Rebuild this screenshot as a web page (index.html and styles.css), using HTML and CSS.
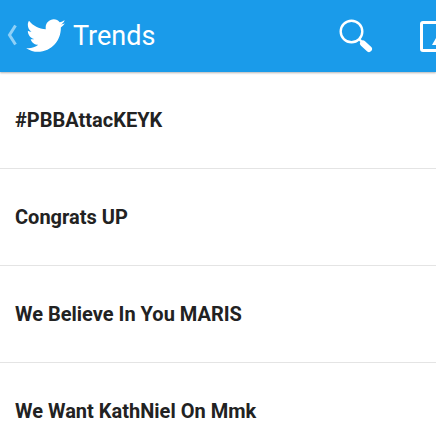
FILE: index.html
```html
<!DOCTYPE html>
<html lang="en">
<head>
    <meta charset="UTF-8">
    <title>Trends</title>
    <link rel="stylesheet" href="styles.css">
</head>
<body>
    <header class="topbar">
        <svg class="back" width="10" height="22" viewBox="0 0 10 22"><path d="M8.500 1.500 L2.500 11 L8.500 20.500" fill="none" stroke="#8fd0f7" stroke-width="3"/></svg>
        <svg class="bird" width="40" height="34" viewBox="0 0 24 20"><path fill="#fff" d="M24 2.400c-.9.400-1.500.500-2.400.700.900-.500 1.900-1.600 2.200-2.600-.800.500-2 1-3 1.200C20 .700 18.700 0 17.300 0c-2.700 0-4.900 2.200-4.900 4.900 0 .400 0 .800.100 1.100C8.400 5.800 4.800 3.900 2.400.900c-.500.700-.700 1.600-.700 2.500 0 1.700.900 3.200 2.200 4.100-.800 0-1.600-.200-2.200-.600v.100c0 2.400 1.700 4.400 3.900 4.800-.400.100-.800.200-1.300.200-.300 0-.600 0-.900-.100.600 1.900 2.400 3.400 4.600 3.400-1.700 1.300-3.800 2.100-6.100 2.100-.400 0-.800 0-1.200-.100C2.900 18.700 5.500 19.500 7.500 19.500c9.100 0 14-7.500 14-14v-.600c1-.700 1.800-1.600 2.500-2.500z"/></svg>
        <span class="title">Trends</span>
        <svg class="search" width="34" height="35" viewBox="0 0 34 35"><circle cx="12.500" cy="12.500" r="10.800" fill="none" stroke="#fff" stroke-width="2.400"/><path d="M20 20 L24 24" stroke="#fff" stroke-width="2.400"/><path d="M24 24.500 L30 30" stroke="#fff" stroke-width="6" stroke-linecap="round"/></svg>
        <svg class="compose" width="16" height="31" viewBox="0 0 16 31"><path d="M16 1.500 H3 Q1.500 1.500 1.500 3 V28 Q1.500 29.500 3 29.500 H16" fill="none" stroke="#fff" stroke-width="3"/><path d="M12 24 L16 17 V24 Z" fill="#fff"/></svg>
    </header>
    <ul class="trends">
        <li>#PBBAttacKEYK</li>
        <li>Congrats UP</li>
        <li>We Believe In You MARIS</li>
        <li>We Want KathNiel On Mmk</li>
    </ul>
</body>
</html>
```

FILE: styles.css
```css
html, body {
    margin: 0;
    height: 100%;
    overflow: hidden;
    background-color: #fff;
    font-family: Roboto, "Liberation Sans", sans-serif;
}

.topbar {
    display: flex;
    align-items: center;
    height: 72px;
    background-color: #1a9bea;
    box-shadow: 0 1px 2px rgba(0, 0, 0, 0.3);
}

.back {
    margin-left: 7px;
    margin-top: -2px;
}

.bird {
    margin-left: 8px;
}

.title {
    margin-left: 8px;
    color: #fff;
    font-size: 27px;
}

.search {
    margin-left: auto;
    margin-top: 1px;
}

.compose {
    margin-left: 47px;
}

.trends {
    list-style: none;
    margin: 0;
    padding: 0;
}

.trends li {
    box-sizing: border-box;
    height: 97px;
    padding: 36px 0 0 15px;
    border-bottom: 1px solid #e4e4e4;
    color: #222;
    font-size: 20px;
    font-weight: 700;
    line-height: 24px;
}

.trends li:last-child {
    height: 74px;
    border-bottom: 0;
}
```
